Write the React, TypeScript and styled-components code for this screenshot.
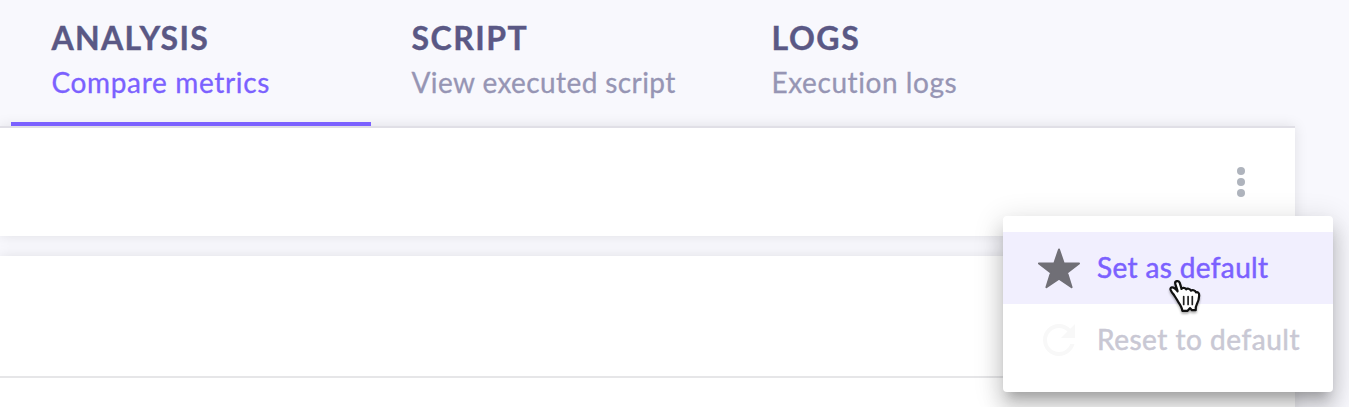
import React from "react";
import styled, { createGlobalStyle } from "styled-components";

const GlobalStyle = createGlobalStyle`
  * { box-sizing: border-box; }
  body {
    margin: 0;
    background: #f8f8fd;
    font-family: Lato, "Open Sans", sans-serif;
    overflow: hidden;
  }
`;

const Page = styled.div`
  position: relative;
  height: 407px;
  overflow: hidden;
  background: #f8f8fd;
`;

const Tabs = styled.nav`
  position: relative;
  z-index: 1;
  display: flex;
  height: 126px;
  padding-left: 11px;
`;

const Tab = styled.div<{ $active?: boolean }>`
  width: 360px;
  padding: 18px 0 0 40.5px;
  border-bottom: 4px solid ${(p) => (p.$active ? "#7b61ff" : "transparent")};
`;

const TabTitle = styled.div<{ $spacing: number }>`
  font-size: 32px;
  line-height: 40px;
  font-weight: 700;
  color: #5a5885;
  -webkit-text-stroke: 0.4px currentColor;
  white-space: nowrap;
  letter-spacing: ${(p) => p.$spacing}px;
`;

const TabCaption = styled.div<{ $active?: boolean; $spacing: number }>`
  margin-top: 7px;
  font-size: 28px;
  line-height: 34px;
  font-weight: 400;
  color: ${(p) => (p.$active ? "#7b61ff" : "#9695b4")};
  -webkit-text-stroke: 0.3px currentColor;
  white-space: nowrap;
  letter-spacing: ${(p) => p.$spacing}px;
`;

const Panels = styled.main`
  display: flex;
  flex-direction: column;
  gap: 20px;
  width: 1295px;
`;

const Panel = styled.section<{ $height: number; $ruled?: boolean }>`
  display: flex;
  justify-content: flex-end;
  height: ${(p) => p.$height}px;
  background: #fff;
  border-top: ${(p) => (p.$ruled ? "2px solid #e0dfe6" : "0")};
  box-shadow: 0 0 13px rgba(0, 0, 0, 0.1);
`;

const PanelHeader = styled.div`
  width: 100%;
  height: 122px;
  border-bottom: 2px solid #e6e6e8;
`;

const MoreButton = styled.button`
  display: flex;
  flex-direction: column;
  align-items: center;
  gap: 3px;
  width: 28px;
  height: 30px;
  margin: 39px 40px 0 0;
  padding: 0;
  border: 0;
  background: none;
`;

const Dot = styled.span`
  width: 8px;
  height: 8px;
  flex: none;
  border-radius: 50%;
  background: #afb4bd;
`;

const Menu = styled.div`
  position: absolute;
  z-index: 2;
  left: 1003px;
  top: 216px;
  width: 330px;
  height: 176px;
  padding: 16px 0;
  border-radius: 4px;
  background: #fff;
  box-shadow:
    0 10px 10px -6px rgba(0, 0, 0, 0.2),
    0 16px 20px 2px rgba(0, 0, 0, 0.14),
    0 6px 28px 4px rgba(0, 0, 0, 0.12);
`;

const MenuItem = styled.div<{ $hovered?: boolean }>`
  display: flex;
  align-items: center;
  height: 72px;
  padding-left: 32px;
  gap: 14px;
  background: ${(p) => (p.$hovered ? "#f1effe" : "transparent")};
  color: ${(p) => (p.$hovered ? "#7b61ff" : "#c9c8d4")};
`;

const ItemIcon = styled.svg`
  flex: none;
  width: 48px;
  height: 48px;
`;

const ItemLabel = styled.span<{ $spacing: number }>`
  padding-bottom: 2px;
  font-size: 28px;
  line-height: 34px;
  -webkit-text-stroke: 0.5px currentColor;
  white-space: nowrap;
  letter-spacing: ${(p) => p.$spacing}px;
`;

const Pointer = styled.svg`
  position: absolute;
  z-index: 3;
  left: 1166px;
  top: 276px;
  width: 38px;
  height: 42px;
  filter: drop-shadow(0 2px 1px rgba(0, 0, 0, 0.3));
`;

const tabs = [
  { title: "ANALYSIS", titleSpacing: 1.3, caption: "Compare metrics", captionSpacing: 0.65, active: true },
  { title: "SCRIPT", titleSpacing: 1.5, caption: "View executed script", captionSpacing: 0.4 },
  { title: "LOGS", titleSpacing: 1.6, caption: "Execution logs", captionSpacing: 0.57 },
];

export default function App() {
  return (
    <Page>
      <GlobalStyle />
      <Tabs>
        {tabs.map((t) => (
          <Tab key={t.title} $active={t.active}>
            <TabTitle $spacing={t.titleSpacing}>{t.title}</TabTitle>
            <TabCaption $active={t.active} $spacing={t.captionSpacing}>{t.caption}</TabCaption>
          </Tab>
        ))}
      </Tabs>
      <Panels>
        <Panel $height={110} $ruled>
          <MoreButton aria-label="More">
            <Dot />
            <Dot />
            <Dot />
          </MoreButton>
        </Panel>
        <Panel $height={180}>
          <PanelHeader />
        </Panel>
      </Panels>
      <Menu>
        <MenuItem $hovered>
          <ItemIcon viewBox="0 0 48 48">
            <path
              d="M24 5.5 28.7 19.2 44 19.4 32 28.6 36.6 43.2 24 34.6 11.4 43.2 16 28.6 4 19.4 19.3 19.2Z"
              fill="#706f76"
              stroke="#706f76"
              strokeWidth="2"
              strokeLinejoin="round"
            />
          </ItemIcon>
          <ItemLabel $spacing={0.36}>Set as default</ItemLabel>
        </MenuItem>
        <MenuItem>
          <ItemIcon viewBox="0 0 24 24">
            <path
              d="M17.65 6.35C16.2 4.9 14.21 4 12 4c-4.42 0-7.99 3.58-7.99 8s3.57 8 7.99 8c3.73 0 6.84-2.55 7.73-6h-2.08c-.82 2.33-3.04 4-5.65 4-3.31 0-6-2.69-6-6s2.69-6 6-6c1.66 0 3.14.69 4.22 1.78L13 11h7V4l-2.35 2.35z"
              fill="#f8f8f8"
            />
          </ItemIcon>
          <ItemLabel $spacing={0.52}>Reset to default</ItemLabel>
        </MenuItem>
      </Menu>
      <Pointer viewBox="0 0 38 42">
        <path
          d="M12.2 25.8C11.3 24.6 10.2 22.2 8.2 19.3C7.1 17.7 4.4 14.7 4.4 12.9C4.7 11.2 6.6 10.9 8.2 12C9.6 12.9 10.8 14.2 11.6 15.3C11.3 13.5 9.7 9.9 9.2 7.5C8.7 5.1 12.4 3.9 13.6 6.5C14.4 8.5 15 11 15.5 13C15.7 11.3 19.6 11.3 20.2 13.5C20.9 12.2 24.3 12.5 24.9 14.7C26 13.5 29.2 14.3 30 16.4C31.8 15.6 33.3 17.2 33.2 19.4C33.1 22.5 32.3 25.5 30.9 28C29.9 29.8 29.6 31.7 29.7 34.2H25.9L24.1 32.1L21.6 34.8H16.3C16.2 32.2 14.3 28.8 12.2 25.8Z"
          fill="#fff"
          stroke="#111"
          strokeWidth="2.2"
          strokeLinejoin="round"
        />
        <path d="M17.7 20.5V28.5M22.1 20.5V28.5M26.3 20.5V28.5" stroke="#222" strokeWidth="1.7" strokeLinecap="round" />
      </Pointer>
    </Page>
  );
}
